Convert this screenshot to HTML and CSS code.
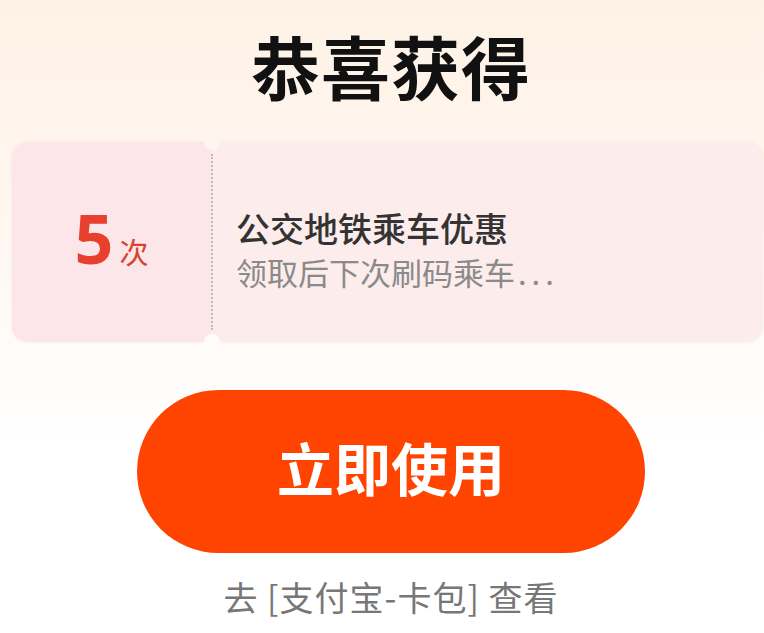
FILE: index.html
```html
<!DOCTYPE html>
<html lang="zh-CN">
<head>
<meta charset="utf-8">
<link rel="stylesheet" href="styles.css">
</head>
<body>
<div class="page">
  <h1 class="title">恭喜获得</h1>
  <div class="coupon">
    <div class="coupon-left">
      <span class="count">5</span><span class="unit">次</span>
    </div>
    <div class="divider"></div>
    <div class="coupon-right">
      <div class="coupon-name">公交地铁乘车优惠</div>
      <div class="coupon-desc">领取后下次刷码乘车<span class="dots">...</span></div>
    </div>
  </div>
  <button class="use-btn">立即使用</button>
  <div class="hint">去 [支付宝-卡包] 查看</div>
</div>
</body>
</html>
```
FILE: styles.css
```css
html, body {
  margin: 0;
  padding: 0;
}
body {
  width: 764px;
  height: 633px;
  overflow: hidden;
  font-family: "Noto Sans CJK SC", "Noto Sans", sans-serif;
  background: linear-gradient(180deg, #fef2e6 0%, #fff7f0 35%, #ffffff 70%, #ffffff 100%);
}
.page {
  display: flex;
  flex-direction: column;
  align-items: center;
  padding-top: 31px;
  padding-left: 18px;
}
.title {
  margin: 0;
  font-size: 69px;
  line-height: 68px;
  font-weight: 700;
  color: #111;
  letter-spacing: 1px;
}
.coupon {
  align-self: stretch;
  margin: 43px 1px 0 -6px;
  height: 200px;
  display: flex;
  border-radius: 16px;
  background: #fdecec;
  position: relative;
  box-shadow: 0 0 3px rgba(230, 200, 200, 0.35);
}
.coupon-left {
  width: 199px;
  display: flex;
  align-items: baseline;
  justify-content: center;
  padding-top: 62px;
  box-sizing: border-box;
  background: #fce6e9;
  border-radius: 16px 0 0 16px;
}
.count {
  font-family: "Noto Sans", "Noto Sans CJK SC", sans-serif;
  font-size: 68px;
  line-height: 68px;
  font-weight: 700;
  color: #e8402f;
}
.unit {
  font-size: 29px;
  line-height: 30px;
  color: #d8432f;
  margin-left: 6px;
}
.divider {
  width: 0;
  border-left: 2px dotted #c9b8bb;
  margin: 12px 0;
  position: relative;
}
.divider::before,
.divider::after {
  content: "";
  position: absolute;
  left: -9px;
  width: 16px;
  height: 16px;
  border-radius: 50%;
  background: #fef5ee;
}
.divider::before {
  top: -20px;
}
.divider::after {
  bottom: -20px;
  background: #fffbf8;
}
.coupon-right {
  flex: 1;
  display: flex;
  flex-direction: column;
  justify-content: center;
  padding-left: 23px;
  padding-top: 14px;
}
.coupon-name {
  font-size: 34px;
  line-height: 46px;
  font-weight: 500;
  color: #333;
}
.coupon-desc {
  font-size: 31px;
  line-height: 42px;
  color: #8a8a8a;
}
.dots {
  letter-spacing: 5px;
  margin-left: 3px;
}
.use-btn {
  margin-top: 48px;
  width: 508px;
  height: 163px;
  border: none;
  border-radius: 82px;
  background: #ff4301;
  color: #fff;
  font-family: "Noto Sans CJK SC", sans-serif;
  font-size: 57px;
  font-weight: 700;
  padding: 0 0 12px 0;
}
.hint {
  margin-top: 24px;
  font-size: 34px;
  line-height: 40px;
  letter-spacing: 1px;
  color: #777;
}
```
